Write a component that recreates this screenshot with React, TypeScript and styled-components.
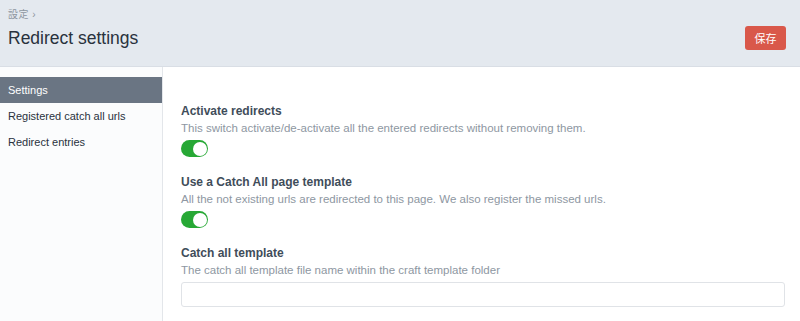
import React, { useState } from 'react';
import styled, { createGlobalStyle } from 'styled-components';

const GlobalStyle = createGlobalStyle`
  html, body {
    margin: 0;
    padding: 0;
    background: #ffffff;
  }
  body {
    font-family: 'Liberation Sans', Arial, 'Noto Sans CJK JP', sans-serif;
    color: #3f4d5a;
  }
  * {
    box-sizing: border-box;
  }
`;

const Page = styled.div`
  width: 800px;
  height: 321px;
  display: flex;
  flex-direction: column;
  overflow: hidden;
`;

const Header = styled.header`
  height: 67px;
  flex-shrink: 0;
  background-color: #e4e9ef;
  border-bottom: 1px solid #d9dee5;
  display: flex;
  align-items: flex-start;
  justify-content: space-between;
  padding: 8px 14px 0 8px;
`;

const TitleBlock = styled.div`
  display: flex;
  flex-direction: column;

  span.crumb {
    font-size: 10px;
    color: #8d96a0;
    line-height: 13px;
    letter-spacing: 0.5px;
  }

  h1 {
    margin: 6px 0 0;
    font-size: 17.5px;
    font-weight: normal;
    color: #29323d;
    line-height: 22px;
  }
`;

const SaveButton = styled.button`
  margin-top: 18px;
  width: 41px;
  height: 24px;
  border: none;
  border-radius: 3px;
  background-color: #d9584a;
  color: #ffffff;
  font-size: 11px;
  font-family: 'Noto Sans CJK JP', sans-serif;
  padding: 0;
`;

const Body = styled.div`
  flex: 1;
  display: flex;
`;

const Sidebar = styled.nav`
  width: 163px;
  flex-shrink: 0;
  background-color: #fbfcfd;
  border-right: 1px solid #e3e6ea;
  padding-top: 10px;
  display: flex;
  flex-direction: column;
`;

const NavItem = styled.div<{ $active?: boolean }>`
  height: 26px;
  line-height: 26px;
  padding-left: 8px;
  font-size: 11px;
  color: ${(p) => (p.$active ? '#ffffff' : '#29323d')};
  background-color: ${(p) => (p.$active ? '#6a7583' : 'transparent')};
`;

const Content = styled.main`
  flex: 1;
  padding: 36px 15px 0 18px;
  display: flex;
  flex-direction: column;
  gap: 17px;
`;

const Field = styled.div`
  display: flex;
  flex-direction: column;

  h3 {
    margin: 0;
    font-size: 12px;
    font-weight: bold;
    color: #3f4d5a;
    line-height: 16px;
  }

  p {
    margin: 1px 0 4px;
    font-size: 11.5px;
    color: #8e97a2;
    line-height: 16px;
  }
`;

const Switch = styled.button<{ $on: boolean }>`
  position: relative;
  width: 27px;
  height: 17px;
  padding: 0;
  border: none;
  border-radius: 9px;
  background-color: ${(p) => (p.$on ? '#27a835' : '#cdd3da')};
  cursor: pointer;

  &::after {
    content: '';
    position: absolute;
    top: 1.5px;
    left: ${(p) => (p.$on ? '11.5px' : '1.5px')};
    width: 14px;
    height: 14px;
    border-radius: 50%;
    background-color: #ffffff;
  }
`;

const TextInput = styled.input`
  margin-top: 0;
  width: 100%;
  height: 25px;
  border: 1px solid #e0e3e7;
  border-radius: 3px;
  background: #ffffff;
`;

const App = () => {
  const [active, setActive] = useState(true);
  const [catchAll, setCatchAll] = useState(true);

  return (
    <Page>
      <GlobalStyle />
      <Header>
        <TitleBlock>
          <span className='crumb'>設定 ›</span>
          <h1>Redirect settings</h1>
        </TitleBlock>
        <SaveButton>保存</SaveButton>
      </Header>
      <Body>
        <Sidebar>
          <NavItem $active>Settings</NavItem>
          <NavItem>Registered catch all urls</NavItem>
          <NavItem>Redirect entries</NavItem>
        </Sidebar>
        <Content>
          <Field>
            <h3>Activate redirects</h3>
            <p>This switch activate/de-activate all the entered redirects without removing them.</p>
            <Switch $on={active} onClick={() => setActive(!active)} />
          </Field>
          <Field>
            <h3>Use a Catch All page template</h3>
            <p>All the not existing urls are redirected to this page. We also register the missed urls.</p>
            <Switch $on={catchAll} onClick={() => setCatchAll(!catchAll)} />
          </Field>
          <Field>
            <h3>Catch all template</h3>
            <p>The catch all template file name within the craft template folder</p>
            <TextInput type='text' />
          </Field>
        </Content>
      </Body>
    </Page>
  );
};

export default App;
